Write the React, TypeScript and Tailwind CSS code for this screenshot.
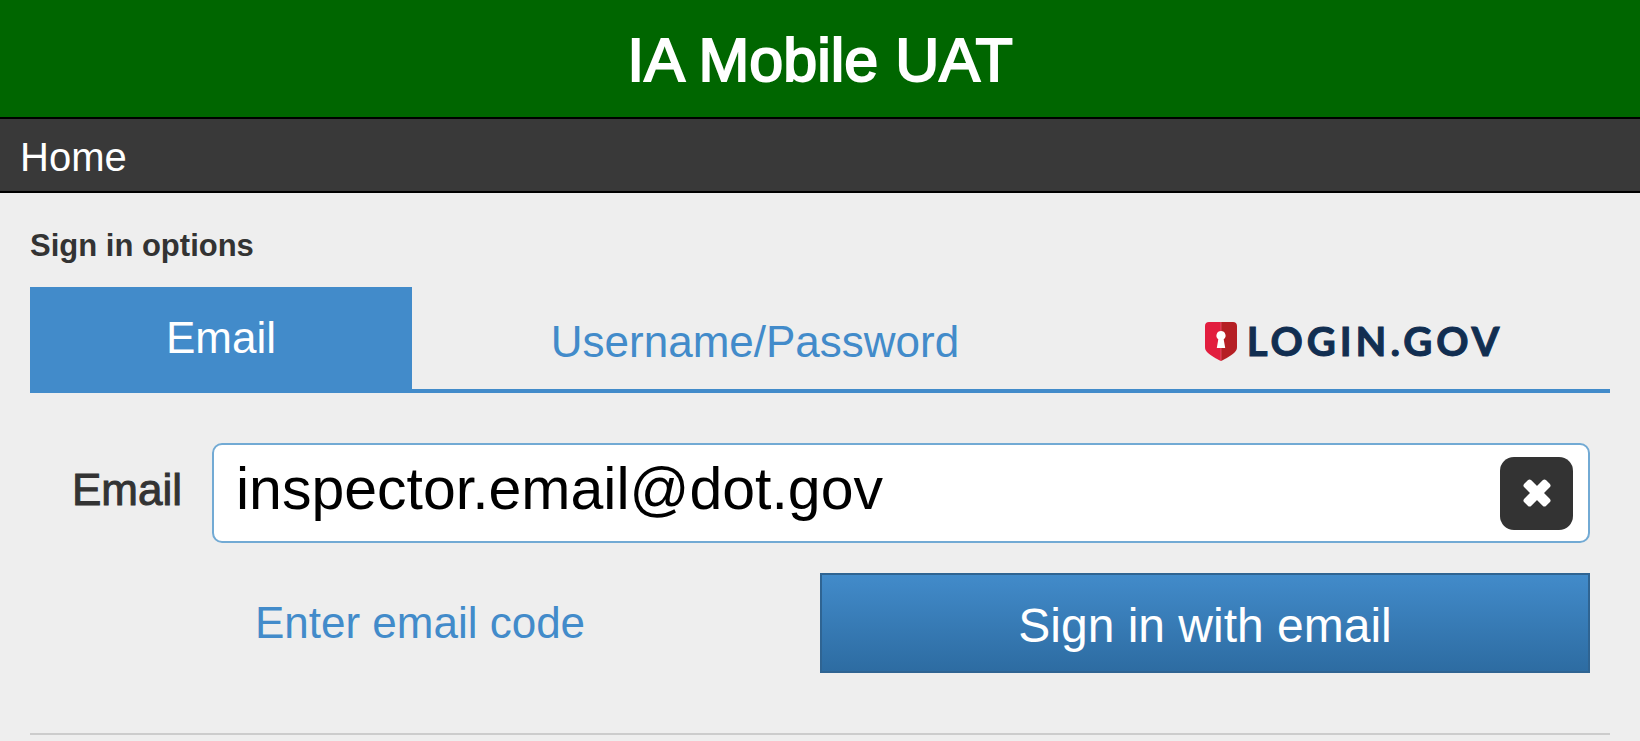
import { useState } from 'react';

function LoginGovLogo() {
  return (
    <span className="flex items-center gap-2.5">
      <svg viewBox="0 0 32 39" className="h-[39px] w-8" aria-hidden="true">
        <path d="M4 0H16V39C12 37 5 33.500 2 30C.6 28.400 0 27 0 25V4C0 1.500 1.500 0 4 0Z" fill="#e21d3e" />
        <path d="M16 0H28C30.500 0 32 1.500 32 4V25C32 27 31.400 28.400 30 30C27 33.500 20 37 16 39Z" fill="#b51f24" />
        <path d="M16 0V39" stroke="#e8707c" strokeWidth=".6" />
        <path d="M16 9A4.600 4.600 0 0 1 18.700 17.300L20.200 26H11.800L13.300 17.300A4.600 4.600 0 0 1 16 9Z" fill="#fff" />
      </svg>
      <span className="font-['Lato',sans-serif] text-[40px] leading-none font-bold tracking-widest text-[#112e51] [-webkit-text-stroke:1px_#112e51]">
        LOGIN.GOV
      </span>
    </span>
  );
}

function ClearIcon() {
  return (
    <svg viewBox="0 0 32 32" className="size-8" aria-hidden="true" fill="#fff">
      <rect x="0.500" y="11" width="31" height="10" rx="2.500" transform="rotate(45 16 16)" />
      <rect x="0.500" y="11" width="31" height="10" rx="2.500" transform="rotate(-45 16 16)" />
    </svg>
  );
}

export default function App() {
  const [email, setEmail] = useState('inspector.email@dot.gov');

  return (
    <div className="min-h-screen bg-[#eee] font-['Liberation_Sans',Arial,sans-serif] text-[#333]">
      <header>
        <h1 className="border-b-2 border-black bg-[#006600] pt-[30px] pb-[27px] text-center text-[61px] leading-[60px] text-white [-webkit-text-stroke:2px_white]">
          IA Mobile UAT
        </h1>
        <nav className="border-b-2 border-black bg-[#393939] px-5 pt-[18px] pb-[14px] text-[40px] leading-[40px] text-white">
          <a href="#home">Home</a>
        </nav>
      </header>

      <main className="px-[30px] pt-[35px]">
        <h2 className="text-[31px] leading-[36px] font-bold">Sign in options</h2>

        <div
          role="tablist"
          aria-label="Sign in options"
          className="mt-[23px] grid grid-cols-[382fr_686fr_512fr] border-b-4 border-[#428bca] text-[44px] leading-[50px] text-[#428bca]"
        >
          <button type="button" role="tab" aria-selected="true" className="bg-[#428bca] py-[26px] text-white">
            Email
          </button>
          <button type="button" role="tab" aria-selected="false" className="pt-2">
            Username/Password
          </button>
          <button type="button" role="tab" aria-selected="false" className="flex items-center justify-center pt-1.5">
            <LoginGovLogo />
          </button>
        </div>

        <form className="border-b-2 border-[#ccc] px-5 pt-[50px] pb-[60px]" onSubmit={(e) => e.preventDefault()}>
          <div className="flex items-center">
            <label
              htmlFor="email"
              className="w-[162px] shrink-0 pr-[30px] pb-1.5 text-right text-[44px] leading-[50px] [-webkit-text-stroke:1px_#333]"
            >
              Email
            </label>
            <div className="flex h-[100px] min-w-0 grow items-center rounded-[10px] border-2 border-[#72aad4] bg-white pr-[15px] pl-[22px]">
              <input
                id="email"
                type="email"
                value={email}
                onChange={(e) => setEmail(e.target.value)}
                className="min-w-0 grow pb-2 text-[59px] leading-[68px] text-black outline-none"
              />
              <button
                type="button"
                aria-label="Clear email"
                onClick={() => setEmail('')}
                className="flex size-[73px] shrink-0 items-center justify-center rounded-[14px] bg-[#333]"
              >
                <ClearIcon />
              </button>
            </div>
          </div>

          <div className="mt-[30px] grid grid-cols-2 items-center">
            <a href="#code" className="pr-[30px] text-center text-[44px] leading-[50px] text-[#428bca]">
              Enter email code
            </a>
            <button
              type="submit"
              className="h-[100px] border-2 border-[#2f6492] bg-linear-to-b from-[#428bca] to-[#2d6ca2] pt-1.5 text-[48px] leading-[54px] text-white"
            >
              Sign in with email
            </button>
          </div>
        </form>
      </main>
    </div>
  );
}
